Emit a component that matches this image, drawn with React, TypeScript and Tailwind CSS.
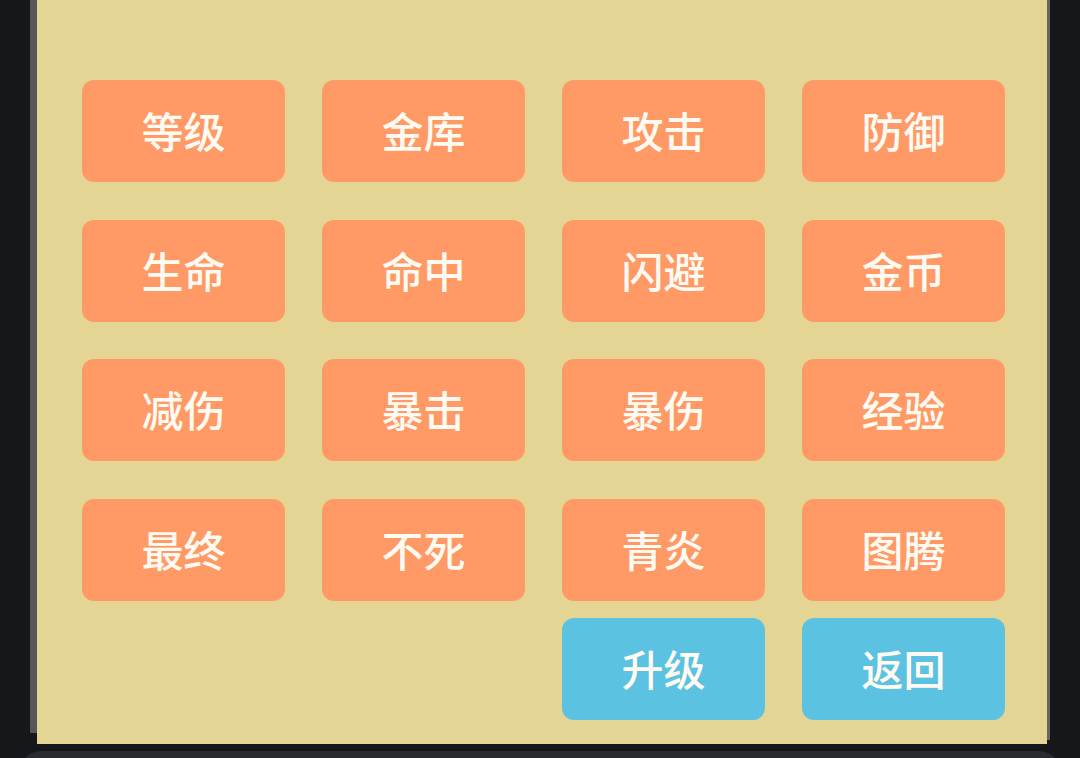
import React from 'react';

const rows: string[][] = [
  ['等级', '金库', '攻击', '防御'],
  ['生命', '命中', '闪避', '金币'],
  ['减伤', '暴击', '暴伤', '经验'],
  ['最终', '不死', '青炎', '图腾'],
];

function Tile({ label, blue }: { label: string; blue?: boolean }) {
  return (
    <button
      className={`w-[203px] h-[102px] rounded-[12px] flex items-center justify-center pb-[2px] text-[42px] font-medium text-[#fffaf2] leading-none ${
        blue ? 'bg-[#5bc3e1]' : 'bg-[#ff9a66]'
      }`}
    >
      {label}
    </button>
  );
}

export default function App() {
  return (
    <div
      className="relative w-[1080px] h-[758px] overflow-hidden bg-[#16171b] flex"
      style={{ fontFamily: '"Noto Sans CJK SC", "Noto Sans", sans-serif' }}
    >
      <div className="w-[30px] shrink-0" />
      <div className="w-[7px] h-[733px] shrink-0 bg-[#56565a]" />
      <div className="w-[1010px] h-[744px] shrink-0 bg-[#e4d594] pl-[45px] pt-[80px]">
        <div className="grid grid-cols-[repeat(4,203px)] gap-x-[37px] gap-y-[37.5px]">
          {rows.flat().map((t) => (
            <Tile key={t} label={t} />
          ))}
        </div>
        <div className="mt-[17px] flex gap-[37px] pl-[480px]">
          <Tile label="升级" blue />
          <Tile label="返回" blue />
        </div>
      </div>
      <div className="w-[3px] h-[740px] shrink-0 bg-[#6a665c]" />
      {/* bottom sheet edge */}
      <div className="absolute left-[18px] right-[18px] top-[751px] h-[40px] rounded-t-[24px] bg-[#2a2b30]" />
    </div>
  );
}
